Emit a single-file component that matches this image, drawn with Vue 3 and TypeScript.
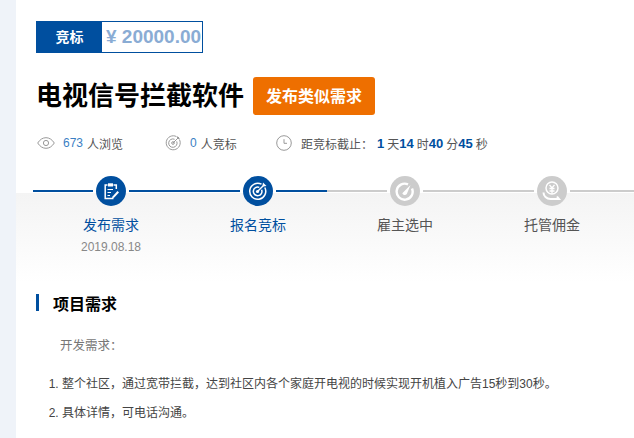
<template>
  <div class="page">
    <aside class="side"></aside>
    <main class="main">
      <div class="head">
        <div class="tag">
          <span class="tag-name">竞标</span>
          <span class="tag-price">¥ 20000.00</span>
        </div>
        <div class="title-row">
          <h1>电视信号拦截软件</h1>
          <button class="similar">发布类似需求</button>
        </div>
        <div class="meta">
          <div class="meta-item views">
            <svg width="18" height="12" viewBox="0 0 18 12" fill="none" stroke="#999" stroke-width="1">
              <path d="M.7 6C3 2.4 5.8.7 9 .7s6 1.700 8.300 5.300C15 9.600 12.200 11.300 9 11.300S3 9.600.7 6z" />
              <circle cx="9" cy="6" r="2.600" />
            </svg>
            <span class="num">673</span><span>人浏览</span>
          </div>
          <div class="meta-item bids">
            <svg width="16" height="16" viewBox="0 0 16 16" fill="none" stroke="#999" stroke-width="1">
              <path d="M11.500 1.600A7 7 0 1 0 14.400 4.500" />
              <path d="M9.600 4.300A4.200 4.200 0 1 0 11.700 6.400" />
              <circle cx="8" cy="8" r="1.300" />
              <path d="M8 8l6-6M12.500 1.500v2h2" />
            </svg>
            <span class="num">0</span><span>人竞标</span>
          </div>
          <div class="meta-item">
            <svg width="16" height="16" viewBox="0 0 16 16" fill="none" stroke="#999" stroke-width="1">
              <circle cx="8" cy="8" r="7.300" />
              <path d="M8 4.200V8.300H11" />
            </svg>
            <span class="deadline">距竞标截止：</span>
            <b class="t first">1</b><span class="unit">天</span>
            <b class="t">14</b><span class="unit">时</span>
            <b class="t">40</b><span class="unit">分</span>
            <b class="t">45</b><span class="unit">秒</span>
          </div>
        </div>
      </div>

      <div class="steps">
        <div v-for="(s, i) in steps" :key="s.name" class="step" :class="{ done: s.done }">
          <div class="step-head">
            <span class="line" :class="{ lead: i === 0, on: s.done }"></span>
            <span class="dot">
              <svg v-if="i === 0" width="20" height="20" viewBox="0 0 20 20" fill="none" stroke="#fff" stroke-width="1.500">
                <path d="M6.500 4H4.200V17.500H12.500M12.500 4h2.800V8" />
                <path d="M7 2.300h5v3.200H7z" fill="#fff" stroke="none" />
                <path d="M6.500 8.500H12M6.500 11.500H10M6.500 14.500H9" stroke-width="1.200" />
                <path d="M11.500 15.500l5-5.500 1.500 1.500-5 5.300-2 .5z" fill="#fff" stroke="none" />
              </svg>
              <svg v-else-if="i === 1" width="20" height="20" viewBox="0 0 20 20" fill="none" stroke="#fff" stroke-width="1.500">
                <path d="M13.500 3.200A8 8 0 1 0 16.800 6.500" />
                <path d="M11.300 6.400A4.300 4.300 0 1 0 13.600 8.700" />
                <circle cx="9.500" cy="10.500" r="1.600" fill="#fff" stroke="none" />
                <path d="M9.500 10.500L16 4" />
                <path d="M15 1.500l-.5 3 1 1 3-.5z" fill="#fff" stroke="none" />
              </svg>
              <svg v-else-if="i === 2" width="20" height="20" viewBox="0 0 20 20" fill="none" stroke="#fff" stroke-width="2.400">
                <path d="M13 3.400A8 8 0 1 0 17 7.500" />
                <path d="M7.300 12.300L15.500 4 11.800 13a2.600 2.600 0 0 1-4.500-.7z" fill="#fff" stroke="none" />
              </svg>
              <svg v-else width="22" height="22" viewBox="0 0 22 22" fill="none" stroke="#fff" stroke-width="1.500">
                <circle cx="11" cy="8" r="6" />
                <path d="M8.500 4.800L11 8l2.500-3.200M8.500 8.500h5M8.500 11h5M11 8v5.500" stroke-width="1.300" />
                <path d="M2.500 12.500c0 3.500 3 6.500 7 6.500h8.500l-2-2.500" stroke-width="2" />
              </svg>
            </span>
            <span class="line" :class="{ trail: i === 3, on: s.done, part: i === 1 }"></span>
          </div>
          <div class="step-name">{{ s.name }}</div>
          <div v-if="s.date" class="step-date">{{ s.date }}</div>
        </div>
      </div>

      <section class="detail">
        <h2>项目需求</h2>
        <p class="intro">开发需求：</p>
        <ol>
          <li>整个社区，通过宽带拦截，达到社区内各个家庭开电视的时候实现开机植入广告15秒到30秒。</li>
          <li>具体详情，可电话沟通。</li>
        </ol>
      </section>
    </main>
  </div>
</template>

<script setup lang="ts">
const steps = [
  { name: '发布需求', date: '2019.08.18', done: true },
  { name: '报名竞标', date: '', done: true },
  { name: '雇主选中', date: '', done: false },
  { name: '托管佣金', date: '', done: false },
]
</script>

<style>
html, body {
  margin: 0;
  overflow: hidden;
  background: #fff;
}
</style>

<style scoped>
.page {
  display: flex;
  height: 438px;
  overflow: hidden;
  font-family: "Liberation Sans", "Noto Sans CJK SC", sans-serif;
  color: #555;
}

.side {
  flex: 0 0 16px;
  background: #eff3f9;
}

.main {
  flex: 1;
  min-width: 0;
}

.head {
  padding: 21px 0 0 20px;
}

.tag {
  display: flex;
  width: 167px;
  height: 32px;
  box-sizing: border-box;
  border: 1px solid #004f9f;
  line-height: 30px;
}

.tag-name {
  flex: 0 0 65px;
  text-align: center;
  background: #004f9f;
  color: #fff;
  font-size: 14px;
  font-weight: 700;
}

.tag-price {
  padding-left: 4px;
  color: #8aacd4;
  font-size: 19px;
  font-weight: 700;
  white-space: nowrap;
}

.title-row {
  display: flex;
  align-items: center;
  margin-top: 24px;
  height: 38px;
}

h1 {
  margin: 0 9px 0 0;
  padding-bottom: 6px;
  color: #000;
  font-size: 26px;
  font-weight: 700;
  white-space: nowrap;
}

.similar {
  width: 122px;
  height: 38px;
  padding: 0 0 2px;
  border: 0;
  border-radius: 3px;
  background: #ee6f00;
  color: #fff;
  font: 700 16px "Liberation Sans", "Noto Sans CJK SC", sans-serif;
}

.meta {
  display: flex;
  align-items: center;
  margin-top: 18px;
  height: 20px;
  font-size: 12px;
  color: #555;
  white-space: nowrap;
}

.meta-item {
  display: flex;
  align-items: center;
}

.meta-item svg {
  flex: none;
}

.views {
  width: 128px;
  margin-left: 1px;
}

.bids {
  width: 111px;
}

.views .num {
  margin: 0 4px 0 8px;
}

.bids .num {
  margin: 0 4px 0 9px;
}

.num {
  color: #3b7fc4;
}

.deadline {
  margin-left: 9px;
}

.t {
  color: #004f9f;
  font-size: 13px;
  font-weight: 700;
}

.t.first {
  margin-left: 4px;
}

.unit {
  margin-left: 3px;
}

.steps {
  display: flex;
  margin-top: 23px;
  height: 106px;
  padding-left: 21.500px;
  background: linear-gradient(#fff 17px, #f4f4f4 17px, #fff 100%);
}

.step {
  flex: 0 0 147px;
  min-width: 0;
  text-align: center;
}

.step-head {
  display: flex;
  align-items: center;
  height: 30px;
}

.dot {
  flex: 0 0 30px;
  width: 30px;
  height: 30px;
  margin: 0 3px;
  display: flex;
  align-items: center;
  justify-content: center;
  border-radius: 50%;
  background: #ccc;
}

.done .dot {
  background: #004f9f;
}

.line {
  flex: 0 0 55.500px;
  height: 2px;
  background: #ccc;
}

.line.on {
  background: #004f9f;
}

.line.part {
  background: linear-gradient(90deg, #004f9f 51px, #ccc 51px);
}

.line.lead {
  flex-basis: 60px;
  margin-left: -4.500px;
}

.line.trail {
  flex-basis: 64.500px;
}

.step-name {
  margin-top: 9px;
  font-size: 14px;
  line-height: 20px;
  color: #555;
}

.done .step-name {
  color: #004f9f;
}

.step-date {
  margin-top: 3px;
  font-size: 12px;
  line-height: 18px;
  color: #888;
}

.detail {
  padding: 12px 0 0 20px;
}

h2 {
  margin: 0;
  padding-left: 14px;
  border-left: 3px solid #004f9f;
  height: 17px;
  line-height: 22px;
  color: #000;
  font-size: 16px;
  font-weight: 700;
}

.intro {
  margin: 26px 0 0 24px;
  font-size: 12.500px;
  line-height: 18px;
  color: #777;
}

ol {
  margin: 15px 0 0;
  padding-left: 26px;
  font-size: 12px;
  color: #444;
}

li {
  line-height: 28px;
  margin-bottom: 1px;
}
</style>
